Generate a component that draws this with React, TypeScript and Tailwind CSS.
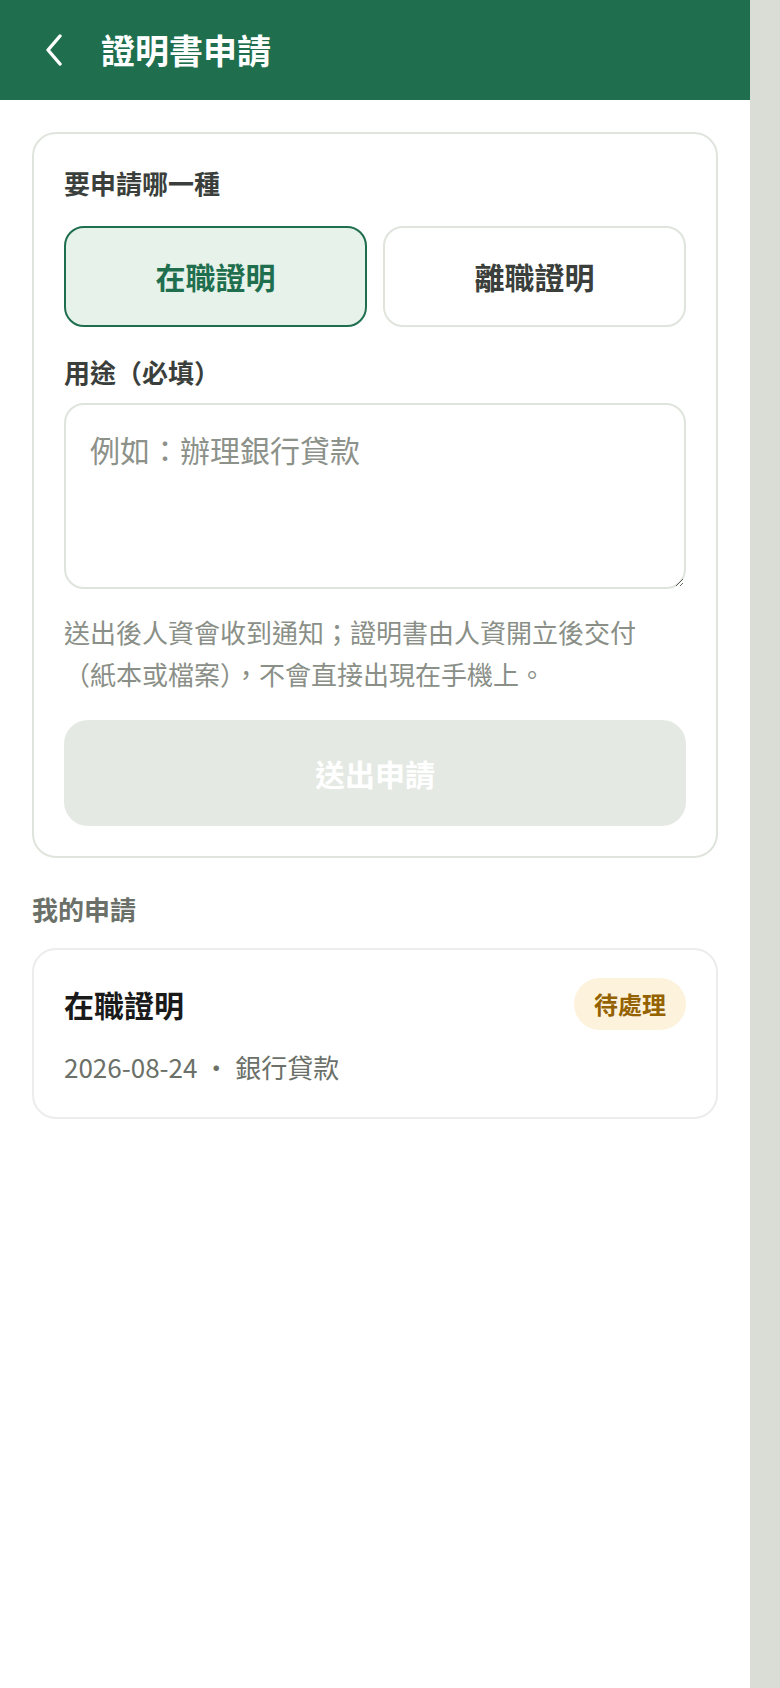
import { useState } from "react"

type CertType = "employment" | "resignation"

const certOptions: { key: CertType; label: string }[] = [
  { key: "employment", label: "在職證明" },
  { key: "resignation", label: "離職證明" },
]

const myRequests = [{ id: 1, type: "在職證明", date: "2026-08-24", purpose: "銀行貸款", status: "待處理" }]

const App = () => {
  const [certType, setCertType] = useState<CertType>("employment")
  const [purpose, setPurpose] = useState<string>("")

  return (
    <div
      className="min-h-screen w-full bg-[#d9ddd6]"
      style={{ fontFamily: '"Noto Sans CJK TC", "Noto Sans", sans-serif' }}
    >
      <div className="w-[750px] min-h-[1688px] bg-white">
        {/* Top header */}
        <header className="h-[100px] bg-[#1f6f4e] flex items-center pl-[44px]">
          <button className="w-[20px] h-[32px] text-white">
            <svg viewBox="0 0 20 32" width="20" height="32" fill="none">
              <path d="M16 2 L4 16 L16 30" stroke="currentColor" strokeWidth="3.4" strokeLinecap="round" strokeLinejoin="round" />
            </svg>
          </button>
          <h1 className="ml-[37px] text-[34px] leading-none font-bold text-white">證明書申請</h1>
        </header>

        <main className="px-[32px] pt-[32px]">
          {/* Request form */}
          <section className="border-2 border-[#dfe4dc] rounded-[24px] p-[30px]">
            <p className="text-[26px] leading-[38px] font-bold text-[#3b3f3b]">要申請哪一種</p>
            <div className="mt-[24px] grid grid-cols-2 gap-[16px]">
              {certOptions.map((opt) => (
                <button
                  key={opt.key}
                  onClick={() => setCertType(opt.key)}
                  className={`h-[101px] rounded-[20px] border-2 text-[30px] font-bold ${
                    certType === opt.key
                      ? "bg-[#e6f2ea] border-[#1f6f4e] text-[#1f6f4e]"
                      : "bg-white border-[#dfe4dc] text-[#3b3f3b]"
                  }`}
                >
                  {opt.label}
                </button>
              ))}
            </div>

            <p className="mt-[26px] text-[26px] leading-[38px] font-bold text-[#3b3f3b]">用途（必填）</p>
            <textarea
              value={purpose}
              onChange={(e) => setPurpose(e.target.value)}
              placeholder="例如：辦理銀行貸款"
              className="mt-[12px] block w-full h-[186px] border-2 border-[#dfe4dc] rounded-[20px] px-[24px] pt-[22px] pb-[20px] text-[30px] leading-[1.5] text-[#1a1a1a] placeholder:text-[#8c918a] outline-none"
            />

            <p className="mt-[22px] text-[26px] leading-[1.6] text-[#8a8f87]">
              送出後人資會收到通知；證明書由人資開立後交付（紙本或檔案），不會直接出現在手機上。
            </p>

            <button
              disabled={!purpose.trim()}
              className="mt-[26px] w-full h-[106px] rounded-[24px] bg-[#e5e9e3] text-white text-[30px] font-bold"
            >
              送出申請
            </button>
          </section>

          {/* My requests */}
          <h2 className="mt-[32px] text-[26px] leading-[38px] font-bold text-[#6b7068]">我的申請</h2>
          <div className="mt-[20px] flex flex-col gap-[16px]">
            {myRequests.map((req) => (
              <div key={req.id} className="border-2 border-[#ececec] rounded-[24px] px-[30px] pt-[28px] pb-[31px]">
                <div className="flex items-center justify-between h-[52px]">
                  <span className="text-[30px] font-bold text-[#1a1a1a]">{req.type}</span>
                  <span className="h-[52px] px-[20px] rounded-full bg-[#fdf3dc] text-[#946200] text-[24px] font-bold flex items-center">
                    {req.status}
                  </span>
                </div>
                <p className="mt-[18px] text-[26px] leading-[38px] text-[#6b7068]">
                  {req.date} · {req.purpose}
                </p>
              </div>
            ))}
          </div>
        </main>
      </div>
    </div>
  )
}

export default App
